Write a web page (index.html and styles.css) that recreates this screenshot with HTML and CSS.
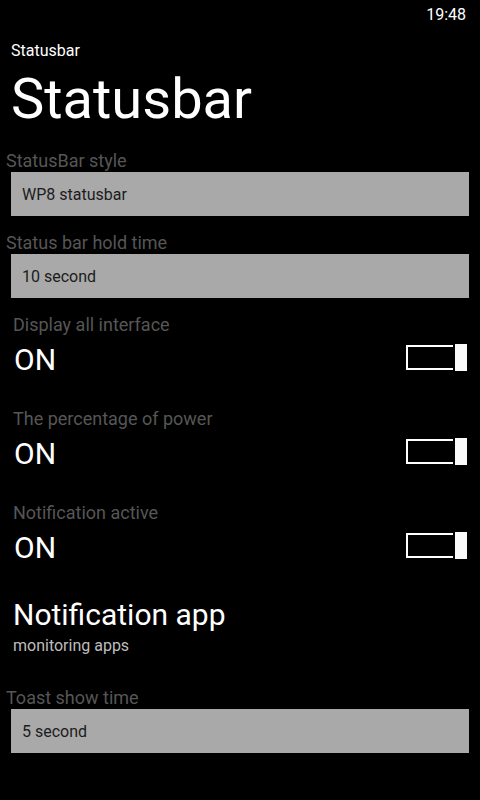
FILE: index.html
```html
<!DOCTYPE html>
<html>
<head>
<meta charset="utf-8">
<link rel="stylesheet" href="styles.css">
</head>
<body>
<div class="screen">
  <div class="statusbar"><span class="time">19:48</span></div>
  <div class="app-name">Statusbar</div>
  <h1 class="page-title">Statusbar</h1>

  <div class="field">
    <div class="field-label">StatusBar style</div>
    <div class="select">WP8 statusbar</div>
  </div>

  <div class="field">
    <div class="field-label">Status bar hold time</div>
    <div class="select">10 second</div>
  </div>

  <div class="toggle-item first">
    <div class="toggle-label">Display all interface</div>
    <div class="toggle-row">
      <span class="toggle-state">ON</span>
      <span class="switch"><span class="track"></span><span class="thumb"></span></span>
    </div>
  </div>

  <div class="toggle-item">
    <div class="toggle-label">The percentage of power</div>
    <div class="toggle-row">
      <span class="toggle-state">ON</span>
      <span class="switch"><span class="track"></span><span class="thumb"></span></span>
    </div>
  </div>

  <div class="toggle-item">
    <div class="toggle-label">Notification active</div>
    <div class="toggle-row">
      <span class="toggle-state">ON</span>
      <span class="switch"><span class="track"></span><span class="thumb"></span></span>
    </div>
  </div>

  <div class="link-item">
    <div class="link-title">Notification app</div>
    <div class="link-sub">monitoring apps</div>
  </div>

  <div class="field toast">
    <div class="field-label">Toast show time</div>
    <div class="select">5 second</div>
  </div>
</div>
</body>
</html>
```

FILE: styles.css
```css
html, body {
  margin: 0;
  padding: 0;
  background: #000;
}

body {
  font-family: Roboto, "Noto Sans", "Liberation Sans", sans-serif;
  color: #fff;
}

.screen {
  width: 480px;
  height: 800px;
  background: #000;
  overflow: hidden;
}

.statusbar {
  height: 30px;
  display: flex;
  justify-content: flex-end;
  padding-right: 14px;
}

.time {
  font-size: 16px;
  line-height: 30px;
  color: #fff;
}

.app-name {
  margin-top: 11px;
  padding-left: 11px;
  font-size: 16px;
  line-height: 20px;
}

.page-title {
  margin: 8px 0 0 0;
  padding-left: 11px;
  font-size: 56px;
  font-weight: 400;
  line-height: 60px;
}

.field {
  margin-top: 22px;
}

.field + .field {
  margin-top: 17px;
}

.field-label {
  padding-left: 6px;
  font-size: 18px;
  line-height: 20px;
  color: #565656;
}

.select {
  margin: 1px 11px 0 11px;
  height: 44px;
  line-height: 45px;
  padding-left: 11px;
  background: #a9a9a9;
  color: #1c1c1c;
  font-size: 16px;
}

.toggle-item {
  margin-top: 31px;
  padding: 0 13px 0 13px;
}

.toggle-item.first {
  margin-top: 17px;
}

.toggle-label {
  font-size: 18px;
  line-height: 20px;
  color: #565656;
}

.toggle-row {
  margin-top: 7px;
  height: 36px;
  display: flex;
  justify-content: space-between;
  align-items: flex-start;
}

.toggle-state {
  padding-left: 1px;
  font-size: 30px;
  line-height: 36px;
  color: #fff;
}

.switch {
  margin-top: 2px;
  display: flex;
  align-items: center;
  gap: 2px;
}

.track {
  width: 47px;
  height: 25px;
  box-sizing: border-box;
  border: 2px solid #fff;
  border-right: none;
}

.thumb {
  width: 12px;
  height: 27px;
  background: #fafafa;
}

.link-item {
  margin-top: 32px;
  padding-left: 13px;
}

.link-title {
  font-size: 30px;
  line-height: 33px;
  color: #fff;
}

.link-sub {
  margin-top: 5px;
  font-size: 16px;
  line-height: 19px;
  color: #bdbdbd;
}

.field.toast {
  margin-top: 33px;
}

.field.toast .select {
  margin-top: 1px;
}
```
